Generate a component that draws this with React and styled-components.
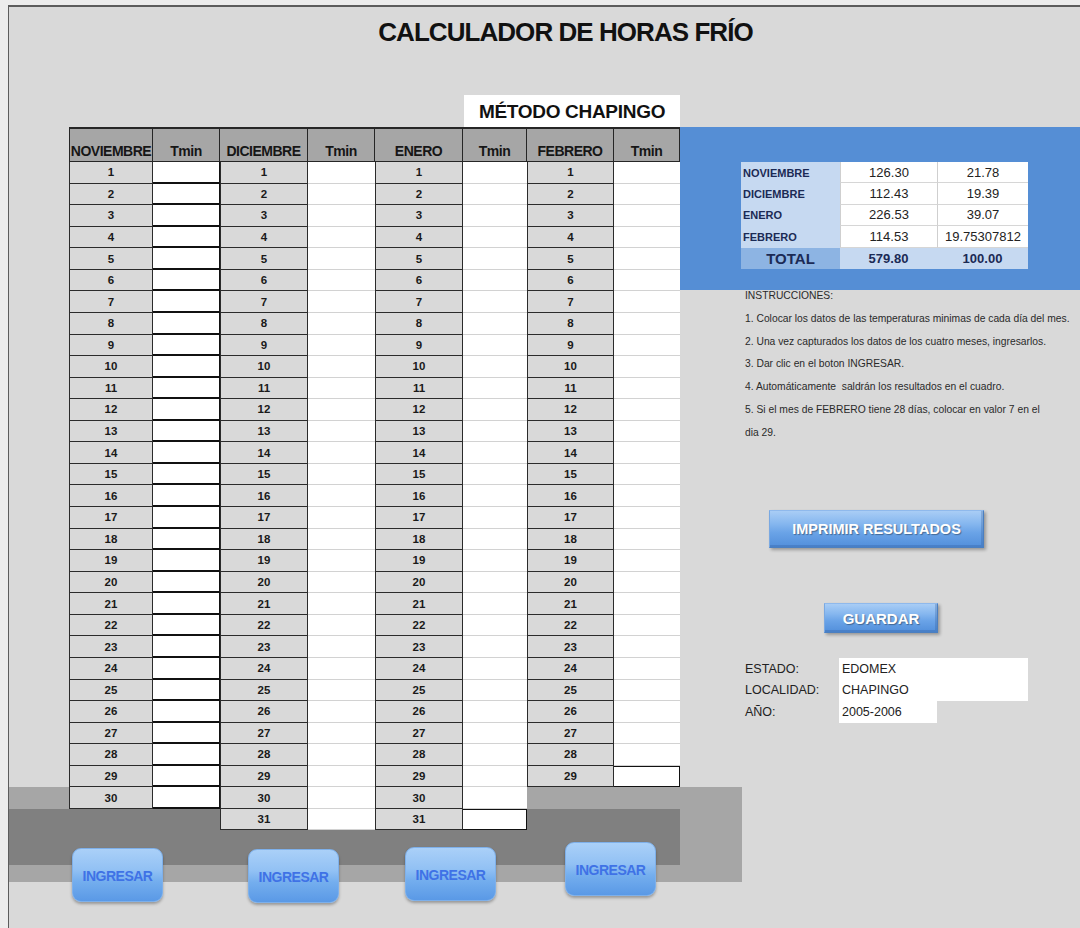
import React from "react";
import styled, { createGlobalStyle } from "styled-components";

const GlobalStyle = createGlobalStyle`
  html, body {
    margin: 0;
    padding: 0;
  }
  body {
    width: 1080px;
    height: 928px;
    overflow: hidden;
    background: #ececec;
    font-family: "Liberation Sans", Arial, sans-serif;
    color: #111;
  }
`;

const ROW_H = 21.57;

const MONTHS = [
  { name: "NOVIEMBRE", days: 30, dayW: 84, tminW: 67, tmin: "boxed", first: true },
  { name: "DICIEMBRE", days: 31, dayW: 88, tminW: 67, tmin: "plain" },
  { name: "ENERO", days: 31, dayW: 88, tminW: 64, tmin: "plain", closeLast: true },
  { name: "FEBRERO", days: 29, dayW: 87, tminW: 66, tmin: "plain", closeLast: true },
];

const SUMMARY = [
  ["NOVIEMBRE", "126.30", "21.78"],
  ["DICIEMBRE", "112.43", "19.39"],
  ["ENERO", "226.53", "39.07"],
  ["FEBRERO", "114.53", "19.75307812"],
];

const STEPS = [
  "INSTRUCCIONES:",
  "1. Colocar los datos de las temperaturas minimas de cada día del mes.",
  "2. Una vez capturados los datos de los cuatro meses, ingresarlos.",
  "3. Dar clic en el boton INGRESAR.",
  "4. Automáticamente\u00a0 saldrán los resultados en el cuadro.",
  "5. Si el mes de FEBRERO tiene 28 días, colocar en valor 7 en el",
  "dia 29.",
];

const INFO = [
  ["ESTADO:", "EDOMEX", 189],
  ["LOCALIDAD:", "CHAPINGO", 189],
  ["AÑO:", "2005-2006", 98],
];

const INGRESAR = [
  { x: 63, y: 6 },
  { x: 85, y: 7 },
  { x: 66, y: 5 },
  { x: 69, y: 0 },
];

/* Sheet: grey work area with the two shaded bands behind the bottom of the grid */
const Sheet = styled.div`
  margin: 5px 0 0 8px;
  height: 923px;
  box-sizing: border-box;
  border-top: 2px solid #5c5c5c;
  border-left: 1px solid #5c5c5c;
  background-color: #d9d9d9;
  background-image: linear-gradient(#808080, #808080),
    linear-gradient(#a6a6a6, #a6a6a6);
  background-repeat: no-repeat;
  background-size: 671px 56px, 733px 95px;
  background-position: 0 802px, 0 780px;
  display: flex;
  flex-direction: column;
`;

const Title = styled.h1`
  margin: 0;
  height: 88px;
  box-sizing: border-box;
  padding: 10px 0 0 42px;
  text-align: center;
  font-family: "Liberation Sans", Arial, sans-serif;
  font-weight: 700;
  font-size: 26px;
  line-height: 30px;
  letter-spacing: -0.95px;
  color: #111;
`;

const Body = styled.div`
  display: flex;
  align-items: flex-start;
`;

const LeftCol = styled.div`
  width: 671px;
  display: flex;
  flex-direction: column;
`;

const RightCol = styled.div`
  width: 400px;
  display: flex;
  flex-direction: column;
  padding-top: 32px;
`;

const MethodBox = styled.div`
  align-self: flex-end;
  width: 216px;
  height: 32px;
  background: #fff;
  display: flex;
  align-items: center;
  justify-content: center;
  padding-top: 2px;
  box-sizing: border-box;
  font-weight: 700;
  font-size: 19px;
  letter-spacing: -0.3px;
  color: #111;
`;

const Grid = styled.div`
  display: flex;
  align-items: flex-start;
  margin-left: 60px;
`;

const MonthBlock = styled.div`
  display: grid;
  grid-template-columns: ${(p) => p.$dayW}px ${(p) => p.$tminW}px;
  grid-template-rows: 35px;
  grid-auto-rows: ${ROW_H}px;
`;

const HeadCell = styled.div`
  box-sizing: border-box;
  background: #a6a6a6;
  border-top: 2px solid #262626;
  border-bottom: 1px solid #262626;
  border-right: 1px solid #262626;
  border-left: ${(p) => (p.$edge ? "1px solid #262626" : "none")};
  display: flex;
  align-items: flex-end;
  justify-content: center;
  padding-bottom: 2px;
  font-weight: 700;
  font-size: 14px;
  letter-spacing: -0.5px;
  color: #161616;
  white-space: nowrap;
`;

const DayCell = styled.div`
  box-sizing: border-box;
  background: #d9d9d9;
  border: 1px solid #2b2b2b;
  border-top: none;
  display: flex;
  align-items: center;
  justify-content: center;
  font-weight: 700;
  font-size: 11.5px;
  color: #1a1a1a;
`;

const TMIN_BORDERS = {
  boxed: "border-right: 1px solid #111; border-bottom: 2px solid #111;",
  plain: "border-bottom: 1px solid #d2d2d2;",
  closed: "border: 1px solid #111; border-left: none;",
};

const TminCell = styled.div`
  box-sizing: border-box;
  background: #fff;
  ${(p) => TMIN_BORDERS[p.$variant]}
`;

const ButtonRow = styled.div`
  display: flex;
  align-items: flex-start;
  margin-top: 12px;
`;

const IngresarButton = styled.button`
  margin: ${(p) => p.$y}px 0 0 ${(p) => p.$x}px;
  width: 91px;
  height: 54px;
  padding: 2px 0 0;
  border: 1px solid #7eb0ea;
  border-radius: 9px;
  background: linear-gradient(
    to bottom,
    #aad0f8 0%,
    #92c1f4 40%,
    #74aeee 62%,
    #5a99e6 100%
  );
  box-shadow: 0 2px 3px rgba(0, 0, 0, 0.3);
  font-family: "Liberation Sans", Arial, sans-serif;
  font-weight: 700;
  font-size: 14px;
  letter-spacing: -0.5px;
  color: #3f72e6;
  cursor: pointer;
`;

const Panel = styled.div`
  height: 163px;
  box-sizing: border-box;
  background: #558ed5;
  padding: 35px 0 0 61px;
`;

const Summary = styled.div`
  display: grid;
  grid-template-columns: 99px 97px 91px;
  grid-auto-rows: 21.4px;
  width: 287px;
`;

const SumLabel = styled.div`
  box-sizing: border-box;
  background: ${(p) => (p.$total ? "#8db4e3" : "#c6d9f1")};
  display: flex;
  align-items: center;
  justify-content: ${(p) => (p.$total ? "center" : "flex-start")};
  padding-left: ${(p) => (p.$total ? "0" : "2px")};
  font-weight: 700;
  font-size: ${(p) => (p.$total ? "15px" : "11px")};
  color: #1b2a55;
`;

const SumValue = styled.div`
  box-sizing: border-box;
  background: ${(p) => (p.$total ? "#c6d9f1" : "#fff")};
  border-left: ${(p) => (p.$total ? "none" : "1px solid #cfcfcf")};
  border-bottom: ${(p) => (p.$total ? "none" : "1px solid #d6d6d6")};
  display: flex;
  align-items: center;
  justify-content: center;
  font-weight: ${(p) => (p.$total ? 700 : 400)};
  font-size: 13px;
  color: ${(p) => (p.$total ? "#1b2a55" : "#222")};
`;

const Instructions = styled.div`
  display: flex;
  flex-direction: column;
  gap: 10.75px;
  padding-left: 65px;
  font-size: 10.3px;
  line-height: 12px;
  color: #2a2a2a;
  white-space: nowrap;
`;

const BevelButton = styled.button`
  margin: ${(p) => p.$top}px 0 0 ${(p) => p.$left}px;
  width: ${(p) => p.$w}px;
  height: ${(p) => p.$h}px;
  padding: 0;
  border: 1px solid #4b7fc0;
  border-top-color: #8fb9ec;
  border-left-color: #7aa9e2;
  background: linear-gradient(
    to bottom,
    #a9cdf5 0%,
    #86b7ef 35%,
    #6aa3e7 60%,
    #528fdb 100%
  );
  box-shadow: 2px 2px 3px rgba(0, 0, 0, 0.3), inset -2px -2px 0 rgba(40, 80, 140, 0.25);
  font-family: "Liberation Sans", Arial, sans-serif;
  font-weight: 700;
  font-size: ${(p) => p.$size}px;
  color: #fff;
  text-shadow: 1px 1px 1px rgba(0, 0, 0, 0.35);
  cursor: pointer;
`;

const InfoGrid = styled.div`
  display: grid;
  grid-template-columns: 94px 189px;
  grid-auto-rows: 21.5px;
  margin: 25px 0 0 65px;
`;

const InfoLabel = styled.div`
  display: flex;
  align-items: center;
  font-size: 12.5px;
  color: #222;
`;

const InfoValue = styled.div`
  box-sizing: border-box;
  width: ${(p) => p.$w}px;
  background: #fff;
  display: flex;
  align-items: center;
  padding-left: 3px;
  font-size: 12.5px;
  color: #222;
`;

function Month({ month }) {
  const rows = [];
  for (let d = 1; d <= month.days; d++) {
    const last = d === month.days;
    const variant = last && month.closeLast ? "closed" : month.tmin;
    rows.push(
      <React.Fragment key={d}>
        <DayCell>{d}</DayCell>
        <TminCell $variant={variant} />
      </React.Fragment>
    );
  }
  return (
    <MonthBlock $dayW={month.dayW} $tminW={month.tminW}>
      <HeadCell $edge={month.first}>{month.name}</HeadCell>
      <HeadCell>Tmin</HeadCell>
      {rows}
    </MonthBlock>
  );
}

export default function App() {
  return (
    <>
      <GlobalStyle />
      <Sheet>
        <Title>CALCULADOR DE HORAS FRÍO</Title>
        <Body>
          <LeftCol>
            <MethodBox>MÉTODO CHAPINGO</MethodBox>
            <Grid>
              {MONTHS.map((m) => (
                <Month key={m.name} month={m} />
              ))}
            </Grid>
            <ButtonRow>
              {INGRESAR.map((b, i) => (
                <IngresarButton key={i} $x={b.x} $y={b.y}>
                  INGRESAR
                </IngresarButton>
              ))}
            </ButtonRow>
          </LeftCol>
          <RightCol>
            <Panel>
              <Summary>
                {SUMMARY.map(([label, hours, pct]) => (
                  <React.Fragment key={label}>
                    <SumLabel>{label}</SumLabel>
                    <SumValue>{hours}</SumValue>
                    <SumValue>{pct}</SumValue>
                  </React.Fragment>
                ))}
                <SumLabel $total>TOTAL</SumLabel>
                <SumValue $total>579.80</SumValue>
                <SumValue $total>100.00</SumValue>
              </Summary>
            </Panel>
            <Instructions>
              {STEPS.map((s) => (
                <div key={s}>{s}</div>
              ))}
            </Instructions>
            <BevelButton $top={71.5} $left={89} $w={215} $h={38} $size={14.5}>
              IMPRIMIR RESULTADOS
            </BevelButton>
            <BevelButton $top={55} $left={144} $w={114} $h={30} $size={15}>
              GUARDAR
            </BevelButton>
            <InfoGrid>
              {INFO.map(([label, value, w]) => (
                <React.Fragment key={label}>
                  <InfoLabel>{label}</InfoLabel>
                  <InfoValue $w={w}>{value}</InfoValue>
                </React.Fragment>
              ))}
            </InfoGrid>
          </RightCol>
        </Body>
      </Sheet>
    </>
  );
}
